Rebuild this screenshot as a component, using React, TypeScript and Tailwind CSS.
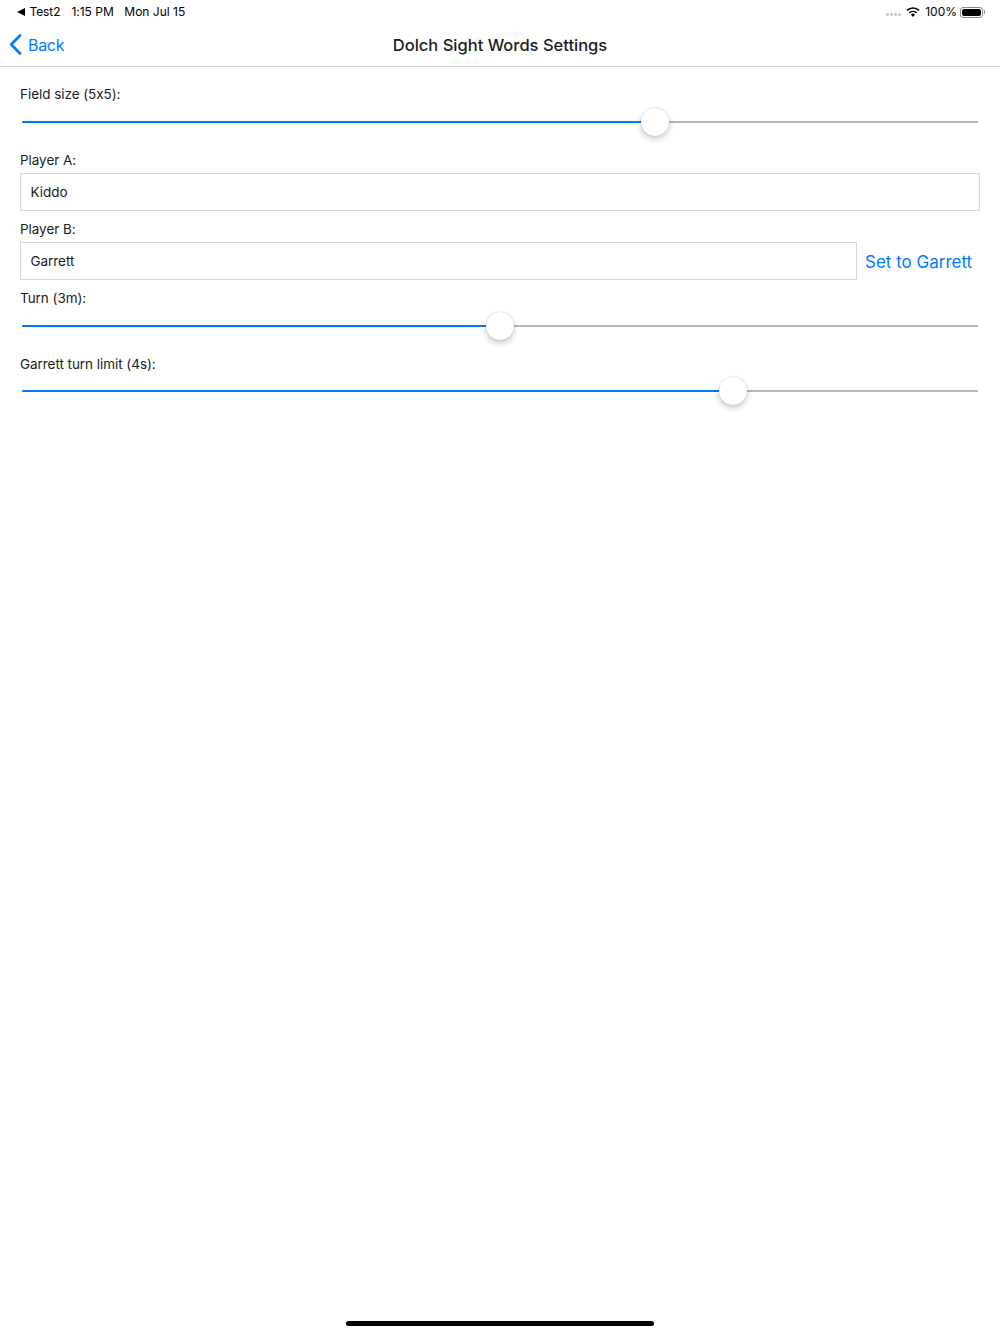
import React from 'react';

const Slider: React.FC<{ value: number }> = ({ value }) => {
    // the thumb travels inside the track, 14px from each end
    const left = 14 + value * 928;
    return (
        <div className="relative h-8 mx-[2px] flex items-center">
            <div className="w-full h-[2px] rounded-full bg-[#b6b6b6]" />
            <div className="absolute left-0 h-[2px] rounded-full bg-[#007aff]" style={{ width: left }} />
            <div
                className="absolute w-7 h-7 -ml-[14px] -mt-[1px] rounded-full bg-white shadow-[0_3px_6px_rgba(0,0,0,0.22),0_0_1px_rgba(0,0,0,0.25)]"
                style={{ left }}
            />
        </div>
    );
};

const Label: React.FC<{ children: React.ReactNode; className?: string }> = ({ children, className }) => (
    <div className={`text-[13.5px] tracking-[-0.05px] leading-5 text-[#1c1c1c] ${className ?? ''}`}>{children}</div>
);

const TextBox: React.FC<{ value: string; className?: string }> = ({ value, className }) => (
    <div className={`h-[38px] flex items-center pl-[9.5px] pr-[10px] border border-[#d6d6d6] text-[13.5px] tracking-[-0.05px] text-[#1c1c1c] ${className ?? ''}`}>
        {value}
    </div>
);

const App: React.FC = () => {
    return (
        <div className="h-[1334px] flex flex-col bg-white font-['Inter',sans-serif] [font-feature-settings:'calt'_0] overflow-hidden">
            <div className="h-6 flex items-center justify-between pl-[17px] pr-[15px] text-[12px] text-black">
                <div className="flex items-center">
                    <svg width="8" height="8" viewBox="0 0 8 8" className="mr-[4.5px]">
                        <path d="M0 4 L8 0 L8 8 Z" fill="#000" />
                    </svg>
                    <span className="tracking-[-0.1px]">Test2</span>
                    <span className="ml-[11px]">1:15 PM</span>
                    <span className="ml-[10.5px]">Mon Jul 15</span>
                </div>
                <div className="flex items-center">
                    <div className="flex gap-[1px] mr-[5px] mt-[4px]">
                        <span className="w-[3px] h-[3px] rounded-full bg-[#c4c4c4]" />
                        <span className="w-[3px] h-[3px] rounded-full bg-[#c4c4c4]" />
                        <span className="w-[3px] h-[3px] rounded-full bg-[#c4c4c4]" />
                        <span className="w-[3px] h-[3px] rounded-full bg-[#c4c4c4]" />
                    </div>
                    <svg width="14" height="10" viewBox="0 0 14 10" className="mr-[5px]">
                        <path d="M7 10 L4.9 7.6 A3 3 0 0 1 9.1 7.6 Z" fill="#000" />
                        <path d="M3.4 5.9 A5.2 5.2 0 0 1 10.6 5.9" stroke="#000" strokeWidth="1.6" fill="none" />
                        <path d="M1 3.4 A8.6 8.6 0 0 1 13 3.4" stroke="#000" strokeWidth="1.6" fill="none" />
                    </svg>
                    <span>100%</span>
                    <div className="ml-[3px] w-[23px] h-[11px] p-[1px] rounded-[3px] border border-[#8a8a8a]">
                        <div className="w-full h-full rounded-[2px] bg-black" />
                    </div>
                    <div className="w-[1px] h-[4px] ml-[1px] rounded-r-sm bg-[#8a8a8a]" />
                </div>
            </div>

            <div className="relative h-[43px] flex items-center justify-center border-b border-[#d0d0d0]">
                <div className="absolute left-[9px] top-[10px] flex items-center text-[#007aff]">
                    <svg width="13" height="21" viewBox="0 0 13 21" className="mr-[6px]">
                        <path d="M11 1.5 L2.2 10.5 L11 19.5" stroke="#007aff" strokeWidth="2.6" fill="none" strokeLinecap="round" strokeLinejoin="round" />
                    </svg>
                    <span className="text-[16px] tracking-[-0.3px] leading-5">Back</span>
                </div>
                <h1 className="text-[16.5px] font-medium text-[#1c1c1c]">Dolch Sight Words Settings</h1>
            </div>

            <div className="px-5 pt-[17px]">
                <Label>Field size (5x5):</Label>
                <div className="mt-[2px]">
                    <Slider value={0.667} />
                </div>
                <Label className="mt-3 mb-[3px]">Player A:</Label>
                <TextBox value="Kiddo" />
                <Label className="mt-2 mb-[3px]">Player B:</Label>
                <div className="flex items-center">
                    <TextBox value="Garrett" className="w-[837px]" />
                    <span className="ml-[8px] mt-[3px] text-[17px] text-[#007aff]">Set to Garrett</span>
                </div>
                <Label className="mt-2">Turn (3m):</Label>
                <div className="mt-[2px]">
                    <Slider value={0.5} />
                </div>
                <Label className="mt-3">Garrett turn limit (4s):</Label>
                <div className="mt-[1px]">
                    <Slider value={0.751} />
                </div>
            </div>

            <div className="mt-auto mb-2 mx-auto w-[308px] h-[5px] rounded-full bg-black" />
        </div>
    );
};

export default App;
